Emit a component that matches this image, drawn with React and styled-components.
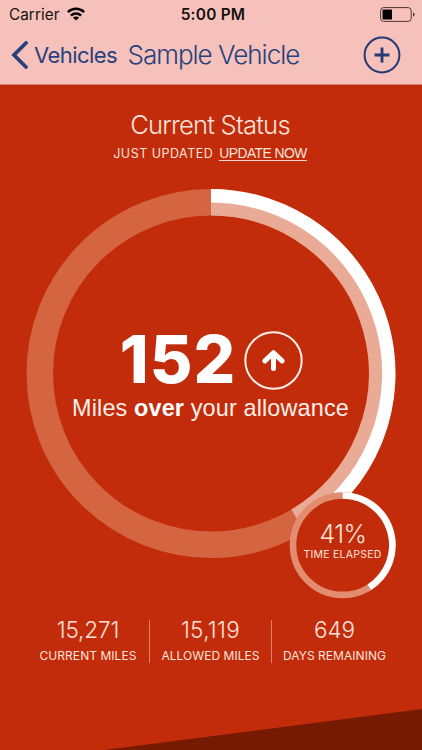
import React from "react";
import styled, { createGlobalStyle, css } from "styled-components";

const Global = createGlobalStyle`
  * { box-sizing: border-box; }
  html, body { margin: 0; padding: 0; background: #c22c0b; }
`;

const sf = `Inter, "Liberation Sans", sans-serif`;
const helvetica = `"Liberation Sans", Inter, sans-serif`;

const type = css`
  font-family: ${(p) => (p.$helvetica ? helvetica : sf)};
  font-size: ${(p) => p.$size}px;
  font-weight: ${(p) => p.$weight || 400};
  letter-spacing: ${(p) => p.$track || 0}px;
  white-space: nowrap;
`;

const Screen = styled.div`
  width: 422px;
  height: 750px;
  overflow: hidden;
  display: flex;
  flex-direction: column;
  background: #c22c0b;
  color: #fde3da;
`;

const Header = styled.header`
  height: 85px;
  flex: none;
  background: #f6c1bb;
  border-bottom: 1px solid #cf7c6c;
  color: #26417d;
`;

const StatusBar = styled.div`
  height: 28px;
  display: grid;
  grid-template-columns: 1fr auto 1fr;
  align-items: center;
  padding: 0 7px 0 9px;
  color: #16100f;
`;

const Carrier = styled.div`
  display: flex;
  align-items: center;
  gap: 7px;
  ${type}
`;

const Clock = styled.div`
  padding-left: 2px;
  ${type}
`;

const Battery = styled.svg`
  justify-self: end;
`;

const NavBar = styled.nav`
  height: 54px;
  display: flex;
  align-items: center;
  padding: 0 21px 0 11px;
`;

const Back = styled.div`
  display: flex;
  align-items: center;
  gap: 6px;
  width: 116.5px;
  ${type}
`;

const Title = styled.h1`
  margin: 0;
  padding-bottom: 2px;
  flex: 1;
  ${type}
`;

const Status = styled.section`
  height: 104px;
  flex: none;
  display: flex;
  flex-direction: column;
  align-items: center;
  padding: 24px 2px 0 0;
`;

const Heading = styled.h2`
  margin: 0;
  line-height: 32px;
  ${type}
`;

const Updated = styled.div`
  display: flex;
  align-items: baseline;
  gap: 6px;
  margin-top: 3px;
  line-height: 20px;
`;

const Label = styled.span`
  ${type}
`;

const UpdateLink = styled.a`
  line-height: 13px;
  border-bottom: 1px solid #fbd5ca;
  ${type}
`;

const Gauge = styled.section`
  position: relative;
  width: 369px;
  height: 369px;
  flex: none;
  margin-left: 26px;
`;

const Dial = styled.svg`
  position: absolute;
  inset: 0;
  overflow: visible;
`;

const Reading = styled.div`
  position: relative;
  height: 369px;
  display: flex;
  flex-direction: column;
  align-items: center;
  padding-top: 138px;
`;

const Amount = styled.div`
  display: flex;
  align-items: center;
  gap: 8px;
  height: 66px;
  padding-left: 2px;
`;

const Miles = styled.span`
  color: #fff;
  line-height: 66px;
  ${type}
`;

const Caption = styled.p`
  margin: -1px 0 0;
  line-height: 32px;
  color: #fff0ea;
  ${type}
  b { color: #fff; font-weight: 700; }
`;

const Elapsed = styled.div`
  position: absolute;
  left: 263px;
  top: 303px;
  width: 107px;
  height: 107px;
  display: flex;
  flex-direction: column;
  align-items: center;
  padding-top: 27px;
`;

const Percent = styled.span`
  position: relative;
  padding-left: 1px;
  line-height: 30px;
  ${type}
`;

const ElapsedLabel = styled.span`
  position: relative;
  line-height: 12px;
  ${type}
`;

const Stats = styled.section`
  display: grid;
  grid-template-columns: 123px 122px 125px;
  height: 43px;
  flex: none;
  margin: 62px 0 0 27px;
`;

const Stat = styled.div`
  display: flex;
  flex-direction: column;
  align-items: center;
  height: 43px;
  border-right: ${(p) => (p.$last ? "none" : "1px solid #df8061")};
`;

const StatValue = styled.strong`
  line-height: 20px;
  ${type}
`;

const StatLabel = styled.span`
  margin-top: 7px;
  line-height: 18px;
  ${type}
`;

const Slope = styled.svg`
  display: block;
  margin-top: auto;
  flex: none;
`;

const stats = [
  { value: "15,271", label: "CURRENT MILES", track: -0.1 },
  { value: "15,119", label: "ALLOWED MILES", track: 0.3 },
  { value: "649", label: "DAYS REMAINING", track: 0 },
];

function arc(cx, cy, r, from, to) {
  const point = (f) => {
    const a = f * 2 * Math.PI;
    return `${cx + r * Math.sin(a)} ${cy - r * Math.cos(a)}`;
  };
  return `M${point(from)}A${r} ${r} 0 ${to - from > 0.5 ? 1 : 0} 1 ${point(to)}`;
}

export default function App() {
  return (
    <Screen>
      <Global />
      <Header>
        <StatusBar>
          <Carrier $size={15.3} $track={0.05}>
            Carrier
            <svg width="18" height="14" viewBox="0 0 18 14" fill="none" stroke="#080505" strokeWidth="2.6">
              <path d="M0.9 5.1A11.6 11.6 0 0 1 17.1 5.1" />
              <path d="M3.9 8.6A7.3 7.3 0 0 1 14.1 8.6" />
              <path d="M9 13.6L5.9 10.8A4.4 4.4 0 0 1 12.1 10.8Z" fill="#080505" stroke="none" />
            </svg>
          </Carrier>
          <Clock $size={15.4} $weight={600} $track={0.25}>5:00 PM</Clock>
          <Battery width="35" height="15" viewBox="0 0 35 15">
            <rect x="0.6" y="0.6" width="30.6" height="13.8" rx="3" fill="none" stroke="#4b3431" />
            <rect x="2.5" y="2.6" width="9.5" height="9.8" rx="0.6" fill="#000" />
            <path d="M33 5.2Q34.6 6 34.6 7.5T33 9.8Z" fill="#4b3431" />
          </Battery>
        </StatusBar>
        <NavBar>
          <Back $size={22} $track={-0.55}>
            <svg width="17" height="28" viewBox="0 0 17 28" fill="none" stroke="#26417d" strokeWidth="3.8">
              <path d="M15 2L3 14L15 26" strokeLinecap="round" />
            </svg>
            Vehicles
          </Back>
          <Title $size={26} $weight={300} $track={-1}>Sample Vehicle</Title>
          <svg width="38" height="38" viewBox="0 0 38 38" fill="none" stroke="#233a75">
            <circle cx="19" cy="19" r="17.4" strokeWidth="2" />
            <path d="M19 11.5V26.5M11.5 19H26.5" strokeWidth="2.8" />
          </svg>
        </NavBar>
      </Header>

      <Status>
        <Heading $size={25.6} $weight={300} $track={-0.78}>Current Status</Heading>
        <Updated>
          <Label $size={12.5} $track={0.5}>JUST UPDATED</Label>
          <UpdateLink $helvetica $size={13.8} $track={-0.5}>UPDATE NOW</UpdateLink>
        </Updated>
      </Status>

      <Gauge>
        <Dial width="369" height="369" viewBox="0 0 369 369" fill="none">
          <circle cx="185" cy="184.5" r="171.2" stroke="#d56540" strokeWidth="26.5" />
          <path d={arc(185, 184.5, 164.7, 0, 0.415)} stroke="#eaab96" strokeWidth="13.5" />
          <path d={arc(185, 184.5, 177.8, 0, 0.415)} stroke="#fff" strokeWidth="13.4" />
        </Dial>
        <Reading>
          <Amount>
            <Miles $size={65.5} $weight={800} $track={1}>152</Miles>
            <svg width="59" height="59" viewBox="0 0 59 59" fill="none" stroke="#fff0ea">
              <circle cx="29.5" cy="29.5" r="28.2" strokeWidth="2" />
              <path d="M29.5 37.6V23M20.9 29.9L29.5 21.7L38.1 29.9" stroke="#fff" strokeWidth="5" strokeLinejoin="round" strokeLinecap="round" />
            </svg>
          </Amount>
          <Caption $helvetica $size={23.4} $track={0.15}>
            Miles <b>over</b> your allowance
          </Caption>
        </Reading>
        <Elapsed>
          <Dial width="107" height="107" viewBox="0 0 107 107" fill="none">
            <circle cx="53.7" cy="53.2" r="49.7" fill="#c22c0b" stroke="#e28c70" strokeWidth="6.6" />
            <path d={arc(53.7, 53.2, 49.7, 0, 0.41)} stroke="#fff" strokeWidth="6.6" />
          </Dial>
          <Percent $size={25} $weight={300} $track={-0.5}>41%</Percent>
          <ElapsedLabel $size={10.5} $track={0.25}>TIME ELAPSED</ElapsedLabel>
        </Elapsed>
      </Gauge>

      <Stats>
        {stats.map((s, i) => (
          <Stat key={s.label} $last={i === 2}>
            <StatValue $size={22.5} $weight={300} $track={s.track}>{s.value}</StatValue>
            <StatLabel $size={12} $track={0.05}>{s.label}</StatLabel>
          </Stat>
        ))}
      </Stats>

      <Slope width="422" height="42" viewBox="0 0 422 42">
        <path d="M104 42L422 1V42Z" fill="#761b02" />
      </Slope>
    </Screen>
  );
}
